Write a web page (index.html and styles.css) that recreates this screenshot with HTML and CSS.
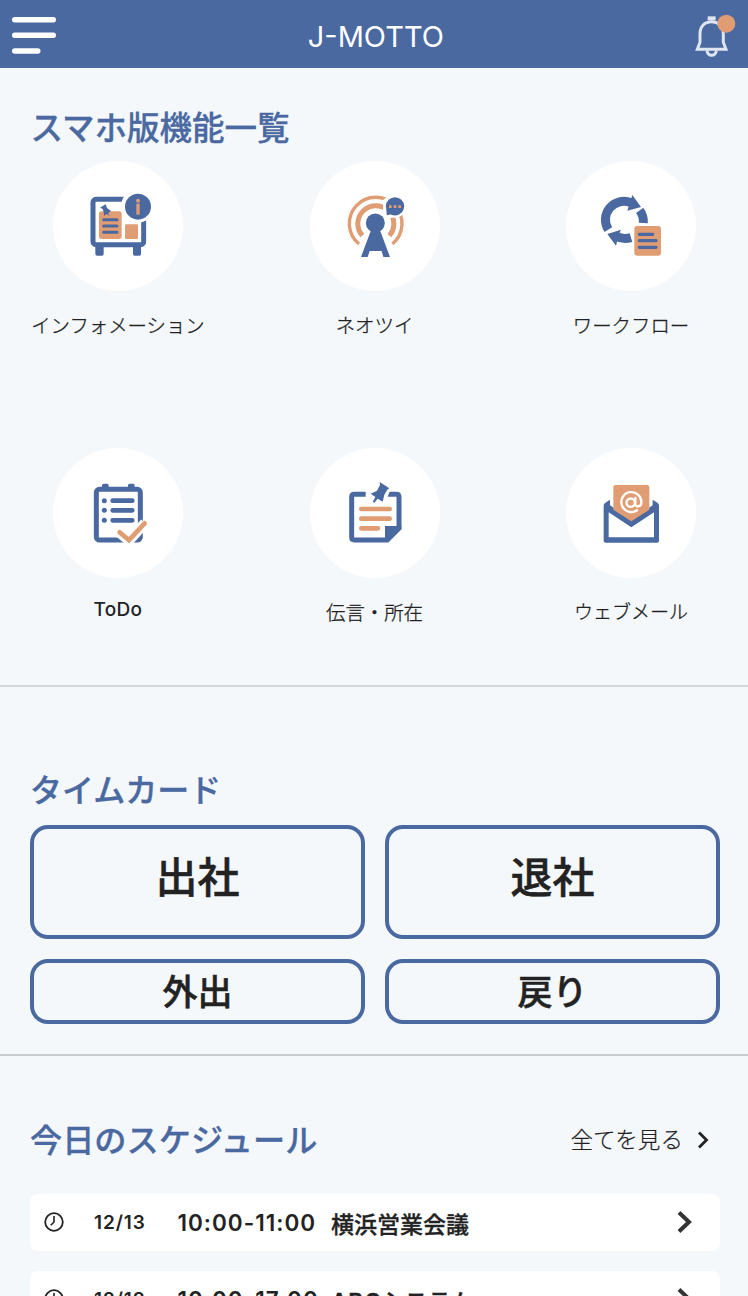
FILE: index.html
```html
<!DOCTYPE html>
<html lang="ja">
<head>
<meta charset="utf-8">
<title>J-MOTTO</title>
<link rel="stylesheet" href="styles.css">
</head>
<body>
<header class="header">
    <svg class="menu" viewBox="0 0 46 40">
        <path d="M3.700 4.800H42.300M3.700 20.300H42.300M3.700 36H26.800" fill="none" stroke="#fff" stroke-width="5.400" stroke-linecap="round"/>
    </svg>
    <h1>J-MOTTO</h1>
    <svg class="bell" viewBox="964 42 124 132">
        <g fill="none" stroke="#dfe6f2">
            <path d="M1002 55H1026" stroke-width="12"/>
            <path d="M979 127V101C979 79 993 65 1014 65C1035 65 1049 79 1049 101V127L1057 148H971Z" stroke-width="9"/>
            <path d="M1000 151C1001 171 1027 171 1028 151" stroke-width="9"/>
        </g>
        <circle cx="1058" cy="71" r="27" fill="#e09c72"/>
    </svg>
</header>

<section class="functions">
    <h2>スマホ版機能一覧</h2>
    <div class="grid">
        <div class="item">
            <div class="circle">
                <svg viewBox="9 3 390 390">
                    <rect x="129" y="118" width="152" height="136" rx="9" fill="none" stroke="#4a69a1" stroke-width="15"/>
                    <path d="M136 258H161V282Q161 287 156 287H141Q136 287 136 282ZM249 258H273V282Q273 287 268 287H254Q249 287 249 282Z" fill="#4a69a1"/>
                    <path d="M224 103L213 130H230V186H272L291 180V103Z" fill="#fff"/>
                    <circle cx="263" cy="140" r="48" fill="#fff"/>
                    <circle cx="264" cy="140" r="39" fill="#4a69a1"/>
                    <circle cx="264" cy="122" r="6" fill="#e09c72"/>
                    <path d="M259 131H269V164H259Z" fill="#e09c72"/>
                    <rect x="147" y="154" width="68" height="83" rx="8" fill="#e09c72"/>
                    <rect x="225" y="193" width="39" height="44" rx="4" fill="#e09c72"/>
                    <path d="M150 143L167 133L171 144L183 153L174 160L180 168L170 162L162 167L161 156L158 147Z" fill="#4a69a1"/>
                    <path d="M161 179H201M161 198H201M161 217H201" stroke="#4a69a1" stroke-width="9" stroke-linecap="round"/>
                </svg>
            </div>
            <p>インフォメーション</p>
        </div>
        <div class="item">
            <div class="circle">
                <svg viewBox="30 3 390 390">
                    <g fill="none" stroke="#e09c72">
                        <path d="M177 252A79 79 0 1 1 277 252" stroke-width="10"/>
                        <path d="M187 227A54 54 0 1 1 268 227" stroke-width="15"/>
                    </g>
                    <path d="M249 120L262 110V160L290 170L262 176L249 160Z" fill="#fff"/>
                    <circle cx="285" cy="139" r="34" fill="#fff"/>
                    <circle cx="285" cy="139" r="27.500" fill="#4a69a1"/>
                    <path d="M259 143L260 166L278 162Z" fill="#4a69a1"/>
                    <path d="M267 136h8v8h-8ZM281 136h8v8h-8ZM295 136h8v8h-8Z" fill="#e09c72"/>
                    <circle cx="226" cy="189" r="28.500" fill="#4a69a1"/>
                    <path d="M213 211H240L270 291H250L245 273H209L203 291H183Z" fill="#4a69a1"/>
                </svg>
            </div>
            <p>ネオツイ</p>
        </div>
        <div class="item">
            <div class="circle">
                <svg viewBox="48 3 390 390">
                    <g fill="none" stroke="#4a69a1" stroke-width="27">
                        <path d="M175 209A55.500 55.500 0 0 1 243 128"/>
                        <path d="M269 151A58 57 0 0 1 280 189"/>
                        <path d="M243 233A56 54 0 0 1 199 229"/>
                    </g>
                    <path d="M247 105L273 141L232 152Z" fill="#4a69a1"/>
                    <path d="M172 222L213 209L208 220L198 257Z" fill="#4a69a1"/>
                    <rect x="253" y="198" width="80" height="89" rx="9" fill="#e09c72"/>
                    <path d="M268 223H308M268 242H318M268 262H318" stroke="#4a69a1" stroke-width="10" stroke-linecap="round"/>
                </svg>
            </div>
            <p>ワークフロー</p>
        </div>
        <div class="item">
            <div class="circle">
                <svg viewBox="9 3 390 390">
                    <rect x="139" y="127" width="132" height="152" rx="9" fill="none" stroke="#4a69a1" stroke-width="15"/>
                    <path d="M156 123V115Q156 110 161 110H171Q176 110 176 115V123ZM234 123V115Q234 110 239 110H249Q254 110 254 115V123Z" fill="#4a69a1"/>
                    <path d="M209 257L237 280L285 228" fill="none" stroke="#fff" stroke-width="31"/>
                    <path d="M188 161H247M188 190H247M188 220H247" stroke="#4a69a1" stroke-width="14" stroke-linecap="round"/>
                    <g fill="#4a69a1">
                        <circle cx="163" cy="161" r="7.500"/>
                        <circle cx="163" cy="190" r="7.500"/>
                        <circle cx="163" cy="220" r="7.500"/>
                    </g>
                    <path d="M209 256L237 279L284 229" fill="none" stroke="#e09c72" stroke-width="14" stroke-linecap="round"/>
                </svg>
            </div>
            <p class="latin">ToDo</p>
        </div>
        <div class="item">
            <div class="circle">
                <svg viewBox="30 3 390 390">
                    <path d="M204 142H163Q155 142 155 150V271Q155 279 163 279H262L297 244V150Q297 142 289 142H262" fill="none" stroke="#4a69a1" stroke-width="15"/>
                    <path d="M255 237H304V246L264 286L255 280Z" fill="#4a69a1"/>
                    <path d="M203 132L209 146L207 153H197V132ZM270 132L262 151H250L262 132Z" fill="#fff"/>
                    <path d="M239 105L268 124L262 128L253 143L248 164L233 155L223 167L218 165L226 150L212 140L231 131L240 114Z" fill="#4a69a1"/>
                    <path d="M184 186H269M184 215H269M184 244H234" stroke="#e09c72" stroke-width="14" stroke-linecap="round"/>
                </svg>
            </div>
            <p>伝言・所在</p>
        </div>
        <div class="item">
            <div class="circle">
                <svg viewBox="48 3 390 390">
                    <path d="M180 158V175L244 219L308 175V158L322 167Q327 170 327 176V281Q327 287 321 287H167Q161 287 161 281V176Q161 170 166 167Z" fill="#4a69a1"/>
                    <path d="M190 121Q190 114 197 114H291Q298 114 298 121V188L244 223L190 188Z" fill="#e09c72"/>
                    <path d="M176 196L244 241L312 196V271H176Z" fill="#fff"/>
                    <g fill="none" stroke="#fff" stroke-width="7" stroke-linecap="round">
                        <circle cx="242" cy="167" r="12.500"/>
                        <path d="M256 153V172C256 181 274 180 274 167A30 30 0 1 0 261 190"/>
                    </g>
                </svg>
            </div>
            <p class="webmail">ウェブメール</p>
        </div>
    </div>
</section>

<section class="timecard">
    <h2>タイムカード</h2>
    <div class="buttons">
        <button class="large">出社</button>
        <button class="large">退社</button>
        <button class="small">外出</button>
        <button class="small">戻り</button>
    </div>
</section>

<section class="schedule">
    <div class="scheduleHead">
        <h2>今日のスケジュール</h2>
        <a class="all">全てを見る
            <svg viewBox="0 0 12 18"><path d="M2 1.500L9.500 9L2 16.500" fill="none" stroke="#222" stroke-width="2.800"/></svg>
        </a>
    </div>
    <div class="row">
        <svg class="clock" viewBox="0 0 20 20"><circle cx="10" cy="10" r="8.800" fill="none" stroke="#222" stroke-width="1.800"/><path d="M10 4V10L6.800 13.300" fill="none" stroke="#222" stroke-width="1.600"/></svg>
        <span class="date">12/13</span>
        <span class="time">10:00-11:00</span>
        <span class="name">横浜営業会議</span>
        <svg class="arrow" viewBox="0 0 16 24"><path d="M2 2.500L12 12L2 21.500" fill="none" stroke="#333" stroke-width="4"/></svg>
    </div>
    <div class="row">
        <svg class="clock" viewBox="0 0 20 20"><circle cx="10" cy="10" r="8.800" fill="none" stroke="#222" stroke-width="1.800"/><path d="M10 4V10L6.800 13.300" fill="none" stroke="#222" stroke-width="1.600"/></svg>
        <span class="date">12/13</span>
        <span class="time">10:00-17:00</span>
        <span class="name"><b>ABC</b>システム</span>
        <svg class="arrow" viewBox="0 0 16 24"><path d="M2 2.500L12 12L2 21.500" fill="none" stroke="#333" stroke-width="4"/></svg>
    </div>
</section>
</body>
</html>
```
FILE: styles.css
```css
html {
    height: 1296px;
    overflow: hidden;
}
body {
    margin: 0;
    height: 1296px;
    overflow: hidden;
    background-color: #f4f8fb;
    color: #222;
    font-family: Inter, "Noto Sans CJK JP", sans-serif;
}
svg {
    display: block;
}
h1, h2, p {
    margin: 0;
}
h2 {
    font-size: 32px;
    line-height: 48px;
    font-weight: 500;
    color: #4a69a1;
    -webkit-text-stroke: 0.3px #4a69a1;
}
.header {
    box-sizing: border-box;
    display: flex;
    justify-content: space-between;
    height: 68px;
    padding: 14px 12px 0 11px;
    background-color: #4a69a1;
}
.header h1 {
    font-size: 29px;
    line-height: 46px;
    font-weight: 400;
    color: #fff;
}
.menu {
    width: 46px;
    height: 40px;
    margin-top: 1px;
}
.bell {
    width: 41.3px;
    height: 44px;
}
.functions {
    box-sizing: border-box;
    height: 619px;
    padding: 37px 30px 0 30.5px;
    border-bottom: 2px solid #d3d7da;
}
.functions h2 {
    font-size: 32.5px;
}
.grid {
    display: grid;
    grid-template-columns: repeat(3, 175px);
    grid-auto-rows: 287px;
    column-gap: 81.5px;
    padding-top: 8px;
}
.item {
    display: flex;
    flex-direction: column;
    align-items: center;
}
.circle {
    width: 130px;
    height: 130px;
    border-radius: 50%;
    background-color: #fff;
}
.item p {
    margin-top: 20px;
    font-size: 19.4px;
    line-height: 30px;
    font-weight: 300;
    white-space: nowrap;
    -webkit-text-stroke: 0.3px #222;
}
.item .latin {
    margin-top: 17px;
    font-size: 19px;
    font-weight: 500;
    letter-spacing: 0.3px;
    -webkit-text-stroke: 0;
}
.item .webmail {
    font-size: 19px;
}
.timecard {
    box-sizing: border-box;
    height: 369px;
    padding: 80px 28px 0 30px;
    border-bottom: 2px solid #c8cacc;
}
.buttons {
    display: grid;
    grid-template-columns: 335px 335px;
    gap: 20px;
    padding-top: 10px;
}
.buttons button {
    padding: 0;
    border: 4px solid #4a69a1;
    border-radius: 18px;
    background: none;
    font-family: inherit;
    font-weight: 500;
    color: #222;
    -webkit-text-stroke: 0.5px #222;
}
.buttons .large {
    height: 114px;
    padding-bottom: 16px;
    font-size: 42px;
}
.buttons .small {
    height: 65px;
    font-size: 35px;
    line-height: 50px;
}
.schedule {
    padding: 61px 28px 0 30px;
}
.schedule h2 {
    font-size: 32.2px;
}
.scheduleHead {
    display: flex;
    justify-content: space-between;
    margin-bottom: 29px;
}
.all {
    display: flex;
    align-items: center;
    gap: 14px;
    padding-right: 11px;
    font-size: 22.6px;
    line-height: 46px;
    height: 46px;
    font-weight: 300;
    -webkit-text-stroke: 0.2px #222;
}
.all svg {
    width: 12px;
    height: 18px;
}
.row {
    display: flex;
    align-items: center;
    height: 57px;
    margin-bottom: 20px;
    border-radius: 8px;
    background-color: #fff;
    white-space: nowrap;
}
.clock {
    width: 20px;
    height: 20px;
    margin-left: 14px;
    margin-bottom: 2px;
}
.date {
    width: 83.5px;
    margin-left: 30px;
    padding-bottom: 1px;
    font-size: 19px;
    font-weight: 600;
    letter-spacing: 0.9px;
}
.time {
    width: 153.5px;
    font-size: 22.5px;
    font-weight: 600;
    letter-spacing: 1px;
}
.name {
    font-size: 23px;
    font-weight: 500;
    -webkit-text-stroke: 0.3px #222;
}
.name b {
    font-size: 22.5px;
    font-weight: 600;
    letter-spacing: 1px;
}
.arrow {
    width: 16px;
    height: 24px;
    margin-left: auto;
    margin-right: 27px;
    margin-bottom: 2px;
}
```
